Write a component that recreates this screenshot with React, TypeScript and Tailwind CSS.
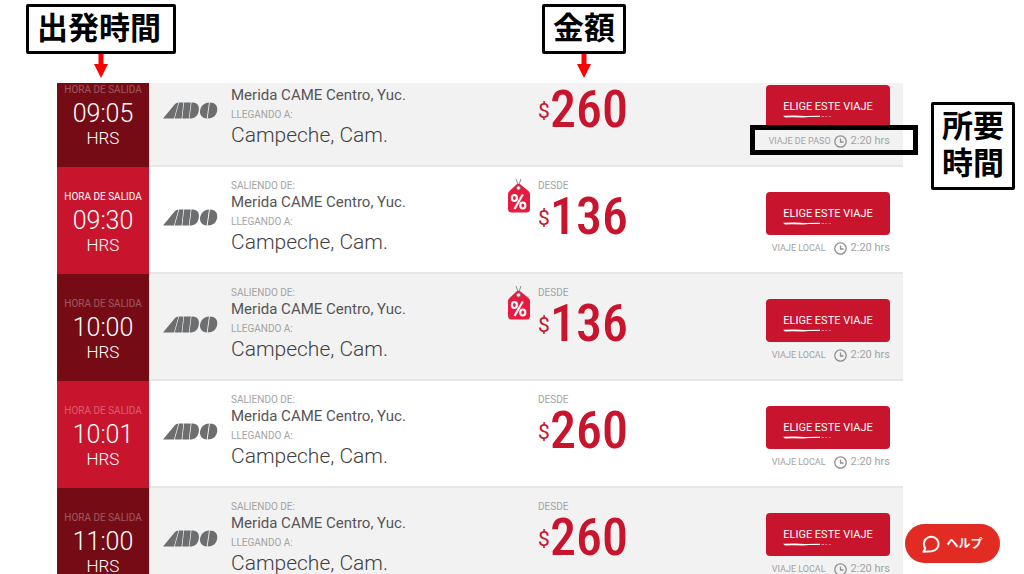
import React from "react";

type Trip = {
  time: string;
  price: number;
  offer?: boolean;
  kind: string;
  strong?: boolean;
  scrolled?: boolean;
};

const trips: Trip[] = [
  { time: "09:05", price: 260, kind: "VIAJE DE PASO", scrolled: true },
  { time: "09:30", price: 136, offer: true, kind: "VIAJE LOCAL", strong: true },
  { time: "10:00", price: 136, offer: true, kind: "VIAJE LOCAL" },
  { time: "10:01", price: 260, kind: "VIAJE LOCAL" },
  { time: "11:00", price: 260, kind: "VIAJE LOCAL" },
];

function AdoLogo() {
  return (
    <svg viewBox="0 0 55 17" className="h-[17px] w-[55px]" role="img" aria-label="ADO" fill="#6d6e70">
      <path d="M0 16.5 12 2Q13.400 .5 15.500 .5L11 16.500Z" />
      <path d="M11.700 16.500 16.200.5H20.400L18.600 16.500Z" />
      <path d="M19.300 16.500 21.100 .5H27.800L25.800 16.500Z" />
      <path d="M26.500 16.500 28.500.5C34 .5 36.500 3 35.800 8.500C35 14 32 16.500 26.500 16.500Z" />
      <path d="M46 .5 43.700 16.500C39 16.300 36.500 13 37.100 8.500C37.800 4 41 .8 46 .5Z" />
      <path d="M46.900.5C52 .5 54.800 3.500 54.200 8.500C53.500 13.500 50 16.500 44.600 16.500Z" />
    </svg>
  );
}

function OfferTag() {
  return (
    <svg viewBox="0 0 24 36" className="h-9 w-6" role="img" aria-label="Oferta">
      <path d="M9 1 11.500 8M14 1 11.500 8" stroke="#8d8d8d" strokeWidth="1" fill="none" />
      <path d="M9.500 6.500Q11.500 5 13.500 6.500L21.500 13Q23 14.500 23 16V31Q23 34.500 19.500 34.500H4.500Q1 34.500 1 31V16Q1 14.500 2.500 13Z" fill="#e61b3f" />
      <circle cx="11.500" cy="10" r="2" fill="#eee" stroke="#777" strokeWidth=".8" />
      <g fill="none" stroke="#fff" strokeWidth="2.200">
        <ellipse cx="7.400" cy="20" rx="2.500" ry="3" />
        <ellipse cx="15.800" cy="27.500" rx="2.500" ry="3" />
        <path d="M15.800 16.500 7.500 31" />
      </g>
    </svg>
  );
}

function Clock() {
  return (
    <svg viewBox="0 0 13 13" className="size-[13px] shrink-0" fill="none" stroke="#8f8f8f" aria-hidden="true">
      <circle cx="6.500" cy="6.500" r="5.700" strokeWidth="1.300" />
      <path d="M6.500 3.500V7H9.500" strokeWidth="1.300" />
    </svg>
  );
}

function Row({ trip, dark }: { trip: Trip; dark: boolean }) {
  const heading = "text-[10px] leading-4 text-[#a3a3a3] " + (trip.scrolled ? "invisible" : "");
  return (
    <li
      className={
        "grid h-[107px] grid-cols-[92px_82px_1fr_259px_137px] " + (dark ? "bg-[#f2f2f2]" : "bg-white")
      }
    >
      <div
        className={
          "flex flex-col items-center pt-[22px] text-white " + (dark ? "bg-[#750b15]" : "bg-[#c8142c]")
        }
      >
        <span className={"text-[10px] leading-4 " + (trip.strong ? "" : "opacity-30")}>HORA DE SALIDA</span>
        <span className="text-[25px] leading-8 font-light">{trip.time}</span>
        <span className="text-[17px] leading-4 font-light">HRS</span>
      </div>
      <div className="border-b-2 border-[#e6e6e6] pt-[42px] pl-[14px]">
        <AdoLogo />
      </div>
      <div className="border-b-2 border-[#e6e6e6] pt-[11px] whitespace-nowrap text-[#555]">
        <p className={heading}>SALIENDO DE:</p>
        <p className="text-[15px] leading-4">Merida CAME Centro, Yuc.</p>
        <p className="pt-1 text-[10px] leading-4 text-[#a3a3a3]">LLEGANDO A:</p>
        <p className="text-[21px] leading-6 font-light text-[#3f3f3f]">Campeche, Cam.</p>
      </div>
      <div className="flex border-b-2 border-[#e6e6e6] pt-[11px]">
        <div className="w-[31px]">{trip.offer && <OfferTag />}</div>
        <div>
          <p className={heading}>DESDE</p>
          <p className="flex text-[#c8142c]">
            <span className="w-3 pt-2 text-[21px] leading-8">$</span>
            <span className="font-['Roboto_Condensed','Liberation_Sans_Narrow',sans-serif] text-[52px] leading-[46px] font-medium">
              {trip.price}
            </span>
          </p>
        </div>
      </div>
      <div className="border-b-2 border-[#e6e6e6] pt-[25px] pr-[13px]">
        <button className="flex h-[43px] w-full items-center justify-center rounded bg-[#c8142c] pt-[3px] text-[11px] leading-4 text-white">
          <span className="flex flex-col">
            <span>ELIGE ESTE VIAJE</span>
            <svg viewBox="0 0 50 3" className="h-[3px] w-[50px]" fill="#fff" aria-hidden="true">
              <path d="M0 .8 12 .5 22 .9 37 .8V2L26 1.900 20 2.500 9 2.200 2 2.500Z" />
              <path d="M38.500 1H41V1.800H38.500ZM42 1H44V1.600H42ZM45.500 1H48V1.500H45.500Z" opacity=".7" />
            </svg>
          </span>
        </button>
        <p className="flex items-center justify-end pt-[5px] text-[11px] leading-4 whitespace-nowrap text-[#a3a3a3]">
          <span className={"text-[9px] " + (trip.kind === "VIAJE DE PASO" ? "mr-[3px]" : "mr-2")}>{trip.kind}</span>
          <Clock />
          <span className="ml-1">2:20 hrs</span>
        </p>
      </div>
    </li>
  );
}

function Arrow() {
  return (
    <svg viewBox="0 0 14 24" className="h-6 w-3.5" fill="#fe0000" aria-hidden="true">
      <path d="M4.500 0H9.500V10H14L7 24 0 10H4.500Z" />
    </svg>
  );
}

export default function App() {
  return (
    <main className="relative flex h-screen flex-col overflow-hidden bg-white pt-[83px] font-['Roboto','Noto_Sans_CJK_JP',sans-serif]">
      <div className="mr-[121px] ml-[57px] flex-1 overflow-hidden">
        <ul className="-mt-[23px]">
          {trips.map((t, i) => (
            <Row key={t.time} trip={t} dark={i % 2 === 0} />
          ))}
        </ul>
      </div>

      <div className="absolute top-1 left-[26px] flex flex-col items-center font-['Noto_Sans_CJK_JP',sans-serif] text-[31px] leading-[38px] font-bold text-black">
        <span className="rounded-xs border-3 border-black bg-white pr-3 pb-1.5 pl-2">出発時間</span>
        <Arrow />
      </div>
      <div className="absolute top-1 left-[542px] flex flex-col items-center font-['Noto_Sans_CJK_JP',sans-serif] text-[31px] leading-[38px] font-bold text-black">
        <span className="rounded-xs border-3 border-black bg-white px-2 pb-1.5">金額</span>
        <Arrow />
      </div>
      <div className="absolute top-[125px] right-[106px] h-[30px] w-[168px] border-5 border-black" />
      <div className="absolute top-[102px] right-[9px] rounded-xs border-3 border-black bg-white px-2 pb-2 font-['Noto_Sans_CJK_JP',sans-serif] text-[31px] leading-[37px] font-bold text-black">
        所要
        <br />
        時間
      </div>

      <button className="absolute right-6 bottom-[11px] flex h-[39px] w-[95px] items-center justify-center gap-1.5 rounded-full bg-[#e12b23] text-[12px] font-bold text-white">
        <svg viewBox="0 0 18 18" className="size-[18px] shrink-0" fill="none" stroke="#fff" strokeWidth="2" aria-hidden="true">
          <path d="M1.500 16.800 3.300 13.300A7.300 7.300 0 1 1 9.500 16.300Q7 16.300 1.500 16.800Z" strokeLinejoin="round" />
        </svg>
        ヘルプ
      </button>
    </main>
  );
}
